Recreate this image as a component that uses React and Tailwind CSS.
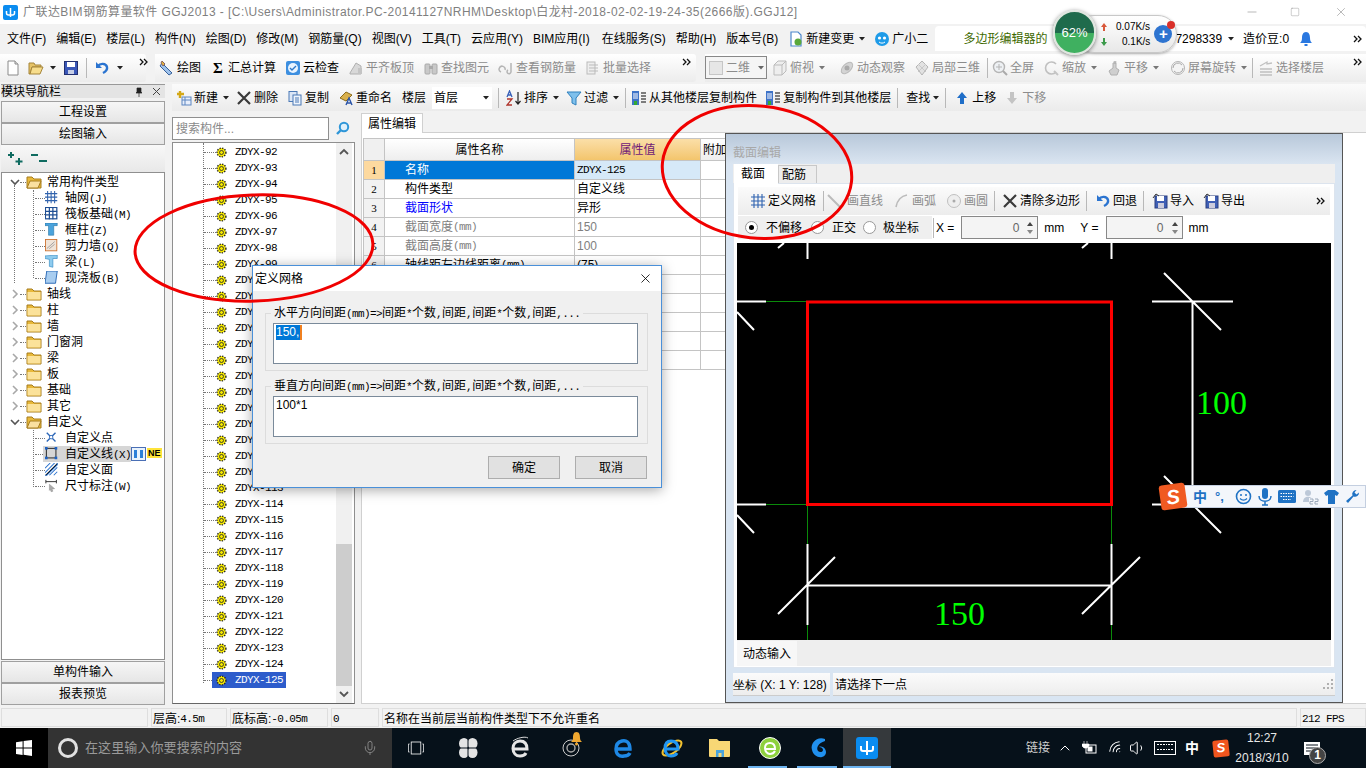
import React from 'react';
import { Mic, ChevronUp, Volume1, Wifi, Minus, Square, X } from 'lucide-react';

const Svg = ({ s = 16, v = 16, children, className = '' }) => (
  <svg width={s} height={s} viewBox={`0 0 ${v} ${v}`} className={`shrink-0 ${className}`}>{children}</svg>
);

const Arrow = ({ c = '#222', className = '' }) => (
  <svg width="6" height="4" viewBox="0 0 6 4" className={`shrink-0 ${className}`}><path d="M0 0h6L3 3.5z" fill={c} /></svg>
);
const More = ({ className = '' }) => (
  <svg width="9" height="8" viewBox="0 0 9 8" className={`shrink-0 ${className}`}><path d="M1 1l3 3-3 3M5 1l3 3-3 3" fill="none" stroke="#111" strokeWidth="1.3" /></svg>
);
const Sep = ({ className = '' }) => <div className={`w-px h-[20px] bg-[#b8b8b8] shrink-0 ${className}`} />;

const I = {
  file: () => <Svg><path d="M3 1h7l3 3v11H3z" fill="#fff" stroke="#8a8a8a" /><path d="M10 1v3h3" fill="#ddd" stroke="#8a8a8a" /></Svg>,
  open: () => <Svg><path d="M1 3h5l1 2h6v2H4L2 14H1z" fill="#e6c367" stroke="#a5853a" /><path d="M4 7h11l-3 7H2z" fill="#f7dd8c" stroke="#a5853a" /></Svg>,
  save: () => <Svg><rect x="1.5" y="1.5" width="13" height="13" fill="#3a57b8" stroke="#222f70" /><rect x="4" y="2" width="8" height="5" fill="#fff" /><rect x="5" y="10" width="6" height="4" fill="#c7cfe6" /></Svg>,
  undo: (c = '#2b74d0') => <Svg><path d="M4 6c2-3 8-3 9 1 .6 3-2 5-4 6" fill="none" stroke={c} strokeWidth="2.4" /><path d="M2 2v6h6z" fill={c} /></Svg>,
  draw: () => <Svg><path d="M3 3l10 10-3 2L1 6z" fill="#9fc2ec" stroke="#35609b" /><path d="M3 1l3 3-2 2-2-3z" fill="#e7b53a" stroke="#866" /></Svg>,
  sigma: () => <span className="w-4 text-center text-[15px] leading-4 font-bold font-['Liberation_Serif',serif] shrink-0">Σ</span>,
  cloud: () => <Svg><rect x="1" y="1" width="14" height="14" rx="2" fill="#3d8fe0" /><circle cx="8" cy="8" r="5" fill="#e9f4ff" /><path d="M5 8l2 2 4-4" fill="none" stroke="#2d78c8" strokeWidth="1.4" /></Svg>,
  gray1: () => <Svg><path d="M2 13l6-10 5 3v8H2z" fill="#d8d8d8" stroke="#b0b0b0" /><rect x="10" y="8" width="4" height="6" fill="#c4c4c4" /></Svg>,
  bino: () => <Svg><rect x="2" y="4" width="5" height="10" rx="1" fill="#c9c9c9" stroke="#aaa" /><rect x="9" y="4" width="5" height="10" rx="1" fill="#c9c9c9" stroke="#aaa" /><rect x="6" y="6" width="4" height="3" fill="#aaa" /></Svg>,
  d6: () => <Svg><path d="M3 12a3 3 0 1 1 4-2M13 3v9a2 2 0 1 1-3-2" fill="none" stroke="#b5b5b5" strokeWidth="1.5" /></Svg>,
  batch: () => <Svg><rect x="2" y="2" width="8" height="12" fill="#eee" stroke="#bbb" /><path d="M4 5h9M4 8h9M4 11h9" stroke="#bbb" /></Svg>,
  cube: () => <Svg><path d="M2 5l4-4h8v10l-4 4H2z" fill="#eee" stroke="#bbb" /><path d="M2 5h8v10M10 5l4-4" fill="none" stroke="#bbb" /></Svg>,
  orbit: () => <Svg><ellipse cx="8" cy="8" rx="7" ry="4" fill="#d4d4d4" stroke="#bbb" transform="rotate(-45 8 8)" /><circle cx="8" cy="8" r="2.5" fill="#aaa" /></Svg>,
  local3d: () => <Svg><path d="M8 1l6 6-6 8-6-8z" fill="#e2e2e2" stroke="#b5b5b5" /><path d="M4 4l8 8M12 4l-8 8" stroke="#c8c8c8" /></Svg>,
  full: () => <Svg><circle cx="7" cy="7" r="5.5" fill="#eef1f4" stroke="#b5b5b5" strokeWidth="1.4" /><path d="M11 11l4 4" stroke="#aaa" strokeWidth="2" /><path d="M7 4v6M4 7h6" stroke="#b5b5b5" /></Svg>,
  zoom: () => <Svg><path d="M12 4a6 6 0 1 0 0 8" fill="none" stroke="#c0c0c0" strokeWidth="1.6" /><path d="M10 11l4 4" stroke="#c5c5c5" strokeWidth="2" /></Svg>,
  pan: () => <Svg><path d="M5 15l-2-4 4-3V3h3v5l3 2-2 5z" fill="#cfcfcf" stroke="#b0b0b0" /><path d="M9 1v3M7.5 2h3" stroke="#aaa" /></Svg>,
  rotate: () => <Svg><circle cx="8" cy="8" r="6.5" fill="#f4f4f4" stroke="#b5b5b5" /><path d="M3 8a5 5 0 0 1 9-3M13 8a5 5 0 0 1-9 3" fill="none" stroke="#aaa" /></Svg>,
  layers: () => <Svg><path d="M2 6l7-4v2l5-1M2 9h12M2 12h12M2 15h12" fill="none" stroke="#c0c0c0" strokeWidth="1.3" /></Svg>,
  newc: () => <Svg><rect x="6" y="7" width="9" height="8" fill="#e7eefb" stroke="#5d86c0" /><path d="M6 10h9M9 7v8" stroke="#5d86c0" /><path d="M4 1v7M1 4h7" stroke="#d4a817" strokeWidth="2.4" /></Svg>,
  del: () => <Svg><path d="M2 2l12 12M14 2L2 14" stroke="#3a3a3a" strokeWidth="2.2" /></Svg>,
  copy: () => <Svg><rect x="2" y="1.5" width="8" height="10" fill="#dbe6f6" stroke="#4b79b5" /><rect x="6" y="5" width="8" height="10" fill="#eef4fc" stroke="#4b79b5" /><path d="M8 8h4M8 10h4M8 12h4" stroke="#4b79b5" /></Svg>,
  rename: () => <Svg><path d="M2 8l6-6 6 3-6 6z" fill="#d9b04c" stroke="#8a6a1a" /><path d="M8 15l3-7 3 7M9 13h4" fill="none" stroke="#2c55a8" strokeWidth="1.4" /></Svg>,
  sort: () => <Svg><path d="M1 7l2.500-6L6 7M2 5h3" fill="none" stroke="#3860b8" strokeWidth="1.300" /><path d="M1 9h5l-5 6h5" fill="none" stroke="#b0342c" strokeWidth="1.300" /><path d="M12 2v12M9.500 11l2.500 3 2.500-3" fill="none" stroke="#222" strokeWidth="1.2" /></Svg>,
  funnel: () => <Svg><path d="M1 2h14L10 8v7l-4-2V8z" fill="#7fc0ec" stroke="#2f80bd" /></Svg>,
  doc2: () => <Svg><rect x="1" y="1" width="7" height="14" fill="#3e73c8" /><path d="M2 4h5M2 6h5M2 8h5" stroke="#fff" /><path d="M10 3h5M10 6h5M10 9h5M10 12h5" stroke="#555" strokeWidth="1.3" /><rect x="3" y="11" width="3" height="4" fill="#3a3" /></Svg>,
  up: (c = '#1f6ec8') => <Svg><path d="M8 2l5 6h-3v6H6V8H3z" fill={c} /></Svg>,
  down: (c = '#c4c4c4') => <Svg><path d="M8 14l5-6h-3V2H6v6H3z" fill={c} /></Svg>,
  doc3: () => <Svg><path d="M3 1h7l3 3v11H3z" fill="#fff" stroke="#4c87cc" strokeWidth="1.2" /><circle cx="10" cy="11" r="3.5" fill="#5aa83a" /></Svg>,
  bot: () => <Svg><ellipse cx="8" cy="8" rx="7" ry="7" fill="#1e9be8" /><circle cx="5.5" cy="7" r="1.6" fill="#fff" /><circle cx="10.5" cy="7" r="1.6" fill="#fff" /><path d="M5 11c2 1.5 4 1.5 6 0" stroke="#fff" fill="none" /></Svg>,
  bell: () => <Svg><path d="M8 1c-3 0-4 3-4 6 0 3-1 4-2 5h12c-1-1-2-2-2-5 0-3-1-6-4-6z" fill="#2a78e0" /><rect x="6.5" y="13" width="3" height="2" fill="#2a78e0" /></Svg>,
  grid: () => <Svg><path d="M1 4h14M1 8h14M1 12h14M4 1v14M8 1v14M12 1v14" stroke="#2f62b0" strokeWidth="1.1" /></Svg>,
  lineg: () => <Svg><path d="M1 2l12 12" stroke="#bbb" strokeWidth="2" /></Svg>,
  arc: () => <Svg><path d="M2 14C3 8 7 3 13 2" fill="none" stroke="#bbb" strokeWidth="1.6" /></Svg>,
  circ: () => <Svg><circle cx="8" cy="8" r="6.5" fill="#eee" stroke="#c0c0c0" /><circle cx="8" cy="8" r="1.5" fill="#aaa" /></Svg>,
  floppy: () => <Svg><rect x="3" y="3" width="12" height="12" fill="#3f5fb5" stroke="#2b3f80" /><rect x="5" y="3" width="7" height="5" fill="#fff" /><rect x="6" y="10" width="6" height="5" fill="#ccd" /><path d="M1 5l3-4 3 2" fill="none" stroke="#333" /></Svg>,
};

const T = ({ ic, label, arrow, gray, className = '', gap = 'gap-[2px]' }) => (
  <div className={`flex items-center shrink-0 ${gap} ${gray ? 'text-[#8c8c8c]' : 'text-black'} ${className}`}>
    {ic}
    <span className="whitespace-nowrap">{label}</span>
    {arrow && <Arrow className="ml-[3px]" c={gray ? '#777' : '#222'} />}
  </div>
);

const Folder = ({ open }) => (
  <Svg s={16}>
    <path d="M1 3h5l2 2h7v9H1z" fill="#e8b93a" stroke="#a67c1e" />
    {open ? <path d="M4 7h11l-3 7H1z" fill="#fae0a0" stroke="#a67c1e" /> : <rect x="1.5" y="6" width="13" height="7.5" fill="#fbe29a" />}
  </Svg>
);

const TreeIcons = {
  axis: <Svg s={14}><path d="M0 3h14M0 7h14M0 11h14M3 0v14M7 0v14M11 0v14" stroke="#3163ad" strokeWidth="1.2" /></Svg>,
  raft: <Svg s={14}><rect x="0.5" y="0.5" width="13" height="13" fill="#fff" stroke="#1f4f94" strokeWidth="1.4" /><path d="M0 5h14M0 9h14M5 0v14M9 0v14" stroke="#1f4f94" strokeWidth="1.4" /></Svg>,
  col: <Svg s={14}><path d="M0 0h14v3H10v11H4V3H0z" fill="#4aa3dc" stroke="#1f6da0" strokeWidth=".6" /></Svg>,
  wall: <Svg s={14}><rect x="0.5" y="0.5" width="13" height="13" fill="#f0e4d8" stroke="#cc6f2d" /><path d="M2 11l9-8M5 11l6-5" stroke="#999" /></Svg>,
  beam: <Svg s={14}><path d="M0 1l14-1v4H9v10l-4-1V5L0 4z" fill="#8ecbee" stroke="#2d86c0" strokeWidth=".7" /></Svg>,
  slab: <Svg s={14}><path d="M2 0h12l-2 14H0z" fill="#a8cdf0" stroke="#1c5fb0" /></Svg>,
  pt: <Svg s={14}><path d="M2 2l10 10M12 2L2 12" stroke="#2b66b8" strokeWidth="1.6" /><circle cx="7" cy="7" r="2" fill="#fff" stroke="#2b66b8" /></Svg>,
  line: <Svg s={14}><rect x="1.5" y="1.5" width="11" height="11" fill="none" stroke="#111" /><g fill="#1d62c4"><rect x="0" y="0" width="3" height="3" /><rect x="11" y="0" width="3" height="3" /><rect x="0" y="11" width="3" height="3" /><rect x="11" y="11" width="3" height="3" /></g></Svg>,
  face: <Svg s={14}><path d="M0 6l6-6M0 11L11 0M0 14h2L14 2V0M5 14l9-9M10 14l4-4" stroke="#2b72cc" strokeWidth="1.2" /></Svg>,
  dim: <Svg s={14}><path d="M1 1v4M13 1v4M1 3h12" stroke="#333" strokeWidth="1.1" /><path d="M5 6l6 5-3 .5 1 2.5-2 .5-1-2.5L5 13z" fill="#aaa" stroke="#888" strokeWidth=".5" /></Svg>,
};

const Mono = ({ children }) => <span className="font-['Liberation_Mono',monospace] text-[11px] tracking-[-0.6px]">{children}</span>;

const Root = ({ label, open }) => (
  <div className="h-4 flex items-center pl-[8px]">
    <svg width="10" height="10" viewBox="0 0 10 10" className="shrink-0">
      {open ? <path d="M1 3l4 4 4-4" fill="none" stroke="#555" strokeWidth="1.6" /> : <path d="M3 1l4 4-4 4" fill="none" stroke="#a8a8a8" strokeWidth="1.6" />}
    </svg>
    <div className="w-[6px] border-t border-dotted border-[#777] shrink-0" />
    <Folder open={open} />
    <span className="ml-[5px] whitespace-nowrap">{label}</span>
  </div>
);

const Child = ({ ic, label, k, selected }) => (
  <div className="h-4 flex items-center pl-[33px]">
    <div className="w-[10px] border-t border-dotted border-[#777] shrink-0" />
    <div className={`flex items-center h-4 ${selected ? 'bg-[#d6d6d6] -ml-[2px] pl-[2px]' : ''}`}>
      <span className="w-[14px] flex justify-center shrink-0">{ic}</span>
      <span className="ml-[6px] whitespace-nowrap">{label}{k && <Mono>({k})</Mono>}</span>
    </div>
    {selected && (
      <>
        <svg width="15" height="14" viewBox="0 0 15 14" className="shrink-0"><rect x=".5" y=".5" width="14" height="13" fill="#e8f2fc" stroke="#4a6fb5" /><path d="M3 3h3v8H3zM9 3h3v8H9z" fill="#2b7fd8" /></svg>
        <span className="ml-px px-px h-[10px] leading-[10px] -mt-[3px] bg-[#ffe43a] text-[9px] font-bold font-['Liberation_Sans',sans-serif]">NE</span>
      </>
    )}
  </div>
);

const SideBtn = ({ children, className = '' }) => (
  <div className={`h-[22px] flex items-center justify-center bg-gradient-to-b from-[#f6f6f6] to-[#e6e6e6] border border-[#a0a0a0] ${className}`}>{children}</div>
);

const LeftPanel = () => (
  <div className="w-[165px] shrink-0 flex flex-col h-[625px] pl-px">
    <div className="h-[14px] mt-[2px] flex items-center justify-between bg-[#e4e4e4] border-t border-[#999] pr-[4px]">
      <span className="text-[12px] leading-[12px] whitespace-nowrap">模块导航栏</span>
      <div className="flex items-center gap-[8px]">
        <Svg s={10} v={10}><path d="M3 1h4v4l1 1H2l1-1zM5 6v4" fill="#222" stroke="#222" strokeWidth=".7" /></Svg>
        <Svg s={9} v={9}><path d="M1 1l7 7M8 1L1 8" stroke="#444" /></Svg>
      </div>
    </div>
    <SideBtn className="mt-[3px]">工程设置</SideBtn>
    <SideBtn>绘图输入</SideBtn>
    <div className="h-[27px] flex items-center gap-[7px] pl-[6px] bg-gradient-to-b from-[#f8f8f8] to-[#e8e8e8]">
      <Svg s={17} v={17}><path d="M4 2v6M1 5h6" stroke="#0f6b60" strokeWidth="2" /><path d="M12 8v7M8.5 11.5h7" stroke="#0f6b60" strokeWidth="2" /></Svg>
      <Svg s={17} v={17}><path d="M0 5h7M8 11h8" stroke="#0f6b60" strokeWidth="2" /></Svg>
    </div>
    <div className="relative h-[488px] bg-white border border-[#8f8f8f] pt-[1px]">
      <div className="absolute left-[12px] top-[12px] h-[98px] border-l border-dotted border-[#777]" />
      <div className="absolute left-[31px] top-[17px] h-[88px] border-l border-dotted border-[#777]" />
      <div className="absolute left-[31px] top-[257px] h-[57px] border-l border-dotted border-[#777]" />
      <Root open label="常用构件类型" />
      <Child ic={TreeIcons.axis} label="轴网" k="J" />
      <Child ic={TreeIcons.raft} label="筏板基础" k="M" />
      <Child ic={TreeIcons.col} label="框柱" k="Z" />
      <Child ic={TreeIcons.wall} label="剪力墙" k="Q" />
      <Child ic={TreeIcons.beam} label="梁" k="L" />
      <Child ic={TreeIcons.slab} label="现浇板" k="B" />
      {['轴线', '柱', '墙', '门窗洞', '梁', '板', '基础', '其它'].map((l, i) => <Root key={i} label={l} />)}
      <Root open label="自定义" />
      <Child ic={TreeIcons.pt} label="自定义点" />
      <Child ic={TreeIcons.line} label="自定义线" k="X" selected />
      <Child ic={TreeIcons.face} label="自定义面" />
      <Child ic={TreeIcons.dim} label="尺寸标注" k="W" />
    </div>
    <SideBtn className="mt-px">单构件输入</SideBtn>
    <SideBtn>报表预览</SideBtn>
  </div>
);

const Gear = () => (
  <svg width="11" height="11" viewBox="0 0 11 11" className="shrink-0">
    <circle cx="5.5" cy="5.5" r="4.4" fill="#f5e800" stroke="#222" strokeWidth="1.4" strokeDasharray="1.3 1.3" />
    <circle cx="5.5" cy="5.5" r="2" fill="#f5e800" stroke="#333" strokeWidth=".9" />
  </svg>
);

const ListPanel = () => {
  const rows = [];
  for (let i = 92; i <= 125; i++) rows.push(i);
  return (
    <div className="w-[183px] shrink-0 flex flex-col">
      <div className="h-[23px] mt-[6px] flex">
        <div className="w-[157px] bg-white border border-[#8f8f8f] flex items-center pl-[3px] text-[#8a8a8a]">搜索构件...</div>
        <div className="flex-1 flex items-center justify-center">
          <svg width="15" height="15" viewBox="0 0 15 15"><circle cx="9" cy="6" r="4.2" fill="#dff0fb" stroke="#2e96d8" strokeWidth="2" /><path d="M6 9l-4 4" stroke="#2e96d8" strokeWidth="2.4" /></svg>
        </div>
      </div>
      <div className="relative mt-[2px] h-[562px] bg-white border border-[#8f8f8f] border-b-[#666] overflow-hidden flex">
        <div className="absolute left-[30px] top-0 bottom-[20px] border-l border-dotted border-[#777]" />
        <div className="flex-1 pt-[1px]">
          {rows.map((n) => (
            <div key={n} className="h-4 flex items-center pl-[31px]">
              <div className="w-[12px] border-t border-dotted border-[#777] shrink-0" />
              <div className={`flex items-center h-4 ${n === 125 ? 'bg-[#2d5ccb] text-white -ml-[4px] pl-[4px] pr-[3px]' : 'text-black'}`}>
                <Gear />
                <span className="ml-[8px] leading-4 text-[11px] tracking-[-0.6px] font-['Liberation_Mono',monospace] whitespace-nowrap">ZDYX-{n}</span>
              </div>
            </div>
          ))}
        </div>
        <div className="w-[16px] mr-[2px] bg-[#f0f0f0] flex flex-col items-center">
          <svg width="16" height="18" viewBox="0 0 16 18" className="shrink-0"><path d="M4 11l4-4 4 4" fill="none" stroke="#555" strokeWidth="1.8" /></svg>
          <div className="flex-1" />
          <div className="w-full h-[142px] bg-[#cdcdcd]" />
          <svg width="16" height="17" viewBox="0 0 16 17" className="shrink-0"><path d="M4 6l4 4 4-4" fill="none" stroke="#555" strokeWidth="1.8" /></svg>
        </div>
      </div>
    </div>
  );
};

const Check = () => <span className="block w-[13px] h-[13px] border border-[#444] bg-white mx-auto" />;

const PropRow = ({ n, name, value, tone, check, mono, active }) => (
  <div className="h-[19px] grid grid-cols-[21px_190px_126px_1fr] border-b border-[#c4c4c4]">
    <div className={`flex items-center justify-center border-r border-[#c4c4c4] text-[11px] font-['Liberation_Serif',serif] ${active ? 'bg-[#fdd99f]' : 'bg-[#f2f2f2]'}`}>{n}</div>
    <div className={`pl-[20px] flex items-center border-r border-[#c4c4c4] whitespace-nowrap ${active ? 'bg-[#0078d7] text-white' : tone}`}>{name}</div>
    <div className={`pl-[2px] flex items-center border-r border-[#c4c4c4] whitespace-nowrap ${active ? 'bg-[#d6e9f8]' : ''} ${tone === 'text-[#808080]' ? 'text-[#808080]' : ''}`}>{mono ? <Mono>{value}</Mono> : value}</div>
    <div className="flex items-center">{check && <Check />}</div>
  </div>
);

const PropPanel = () => (
  <div className="flex-1 flex flex-col ml-[6px] min-w-0">
    <div className="h-[19px] mt-[2px] flex">
      <div className="w-[62px] h-[20px] flex items-center justify-center bg-white border border-b-0 border-[#d0d0d0] z-10">属性编辑</div>
    </div>
    <div className="h-[572px] bg-white border border-[#d0d0d0] border-r-0 pt-[5px] pl-[1px]">
      <div className="w-[800px] border-l border-t border-[#c4c4c4]">
        <div className="h-[22px] grid grid-cols-[21px_190px_126px_1fr] border-b border-[#c4c4c4]">
          <div className="bg-[#f0f0f0] border-r border-[#c4c4c4]" />
          <div className="bg-gradient-to-b from-white to-[#eee] border-r border-[#c4c4c4] flex items-center justify-center">属性名称</div>
          <div className="bg-gradient-to-b from-[#fbdfa8] to-[#f3c56c] border-r border-[#c4c4c4] flex items-center justify-center text-[#701a78]">属性值</div>
          <div className="bg-gradient-to-b from-white to-[#eee] flex items-center pl-[2px]">附加</div>
        </div>
        <PropRow active n="1" name="名称" value="ZDYX-125" mono />
        <PropRow n="2" name="构件类型" value="自定义线" check />
        <PropRow n="3" name="截面形状" value="异形" tone="text-[#0000ff]" />
        <PropRow n="4" name={<>截面宽度<Mono>(mm)</Mono></>} value="150" tone="text-[#808080]" check />
        <PropRow n="5" name={<>截面高度<Mono>(mm)</Mono></>} value="100" tone="text-[#808080]" check />
        <PropRow n="6" name={<>轴线距左边线距离<Mono>(mm)</Mono></>} value="(75)" check />
        {[7, 8, 9, 10, 11].map((n) => <PropRow key={n} n={n} name="" value="" />)}
      </div>
    </div>
  </div>
);

const Legend = ({ label }) => (
  <span className="absolute left-[5px] -top-[9px] bg-[#f0f0f0] px-[3px] text-[12px] leading-[16px] whitespace-nowrap">
    {label}<Mono>(mm)=&gt;</Mono>间距<Mono>*</Mono>个数<Mono>,</Mono>间距<Mono>,</Mono>间距<Mono>*</Mono>个数<Mono>,</Mono>间距<Mono>,...</Mono>
  </span>
);

const Group = ({ label, text, sel }) => (
  <div className="relative w-[383px] h-[58px] border border-[#dcdcdc] ml-[12px] pt-[9px] pl-[7px]">
    <Legend label={label} />
    <div className="w-[365px] h-[41px] bg-white border border-[#7a8a9a] pl-[2px] pt-[1px] font-['Liberation_Sans',sans-serif] text-[12px] leading-[15px]">
      {sel ? <span className="inline-block bg-[#0078d7] text-white pr-px border-r-2 border-r-[#f08020]">{text}</span> : text}
    </div>
  </div>
);

const Dialog = () => (
  <div className="absolute left-[252px] top-[265px] w-[410px] h-[223px] bg-[#f0f0f0] border border-[#4a90d9] shadow-[0_2px_12px_rgba(0,0,0,0.35)] flex flex-col">
    <div className="h-[25px] bg-white flex items-center justify-between pl-[2px] pr-[8px]">
      <span className="text-[12px]">定义网格</span>
      <X size={15} strokeWidth={1.3} className="text-black" />
    </div>
    <div className="h-[22px]" />
    <Group label="水平方向间距" text="150," sel />
    <div className="h-[15px]" />
    <Group label="垂直方向间距" text="100*1" />
    <div className="flex justify-end gap-[15px] pr-[14px] mt-[12px]">
      <div className="w-[72px] h-[23px] flex items-center justify-center bg-[#e1e1e1] border border-[#adadad]">确定</div>
      <div className="w-[72px] h-[23px] flex items-center justify-center bg-[#e1e1e1] border border-[#adadad]">取消</div>
    </div>
  </div>
);

const Canvas = () => (
  <div className="h-[397px] bg-black mx-[3px]">
    <svg width="595" height="397" viewBox="737 243 595 397" className="block" fontFamily="Liberation Serif">
      <g stroke="#0a8a0a" strokeWidth="1">
        <path d="M766 301.5h41M766 504.5h41M807.5 505v135M1111.5 505v135" />
      </g>
      <g stroke="#fff" strokeWidth="2" fill="none">
        <path d="M737 301.5h29M737 312l17 18M737 504.5h29M737 515l17 18" />
        <path d="M807.5 243v16M778 248l6-5M1111.5 243v16M1082 248l6-5" />
        <path d="M1152 301.5h81M1164 273l57 57M1192.5 301v204M1152 504.5h81M1164 476l57 57" />
        <path d="M807.5 544v81M1111.5 544v81M807 585.5h305M778 614l57-57M1082 614l58-57" strokeWidth="2" />
      </g>
      <rect x="807.5" y="302" width="304" height="202.5" fill="none" stroke="#ff0000" strokeWidth="3" />
      <text x="1196" y="414" fontSize="34" fill="#00ff00">100</text>
      <text x="934" y="625" fontSize="34" fill="#00ff00">150</text>
    </svg>
  </div>
);

const Radio = ({ on }) => (
  <span className="w-[13px] h-[13px] rounded-full border border-[#999] bg-white flex items-center justify-center shrink-0">
    {on && <span className="w-[5px] h-[5px] rounded-full bg-black" />}
  </span>
);

const Spin = ({ className = '' }) => (
  <div className={`w-[77px] h-[23px] border border-[#888] bg-[#f4f4f4] flex items-center justify-end text-[#666] font-['Liberation_Sans',sans-serif] ${className}`}>
    <span>0</span>
    <span className="w-[14px] flex flex-col items-center gap-[4px] ml-[4px]">
      <svg width="6" height="4" viewBox="0 0 6 4"><path d="M0 4h6L3 0z" fill="#444" /></svg>
      <svg width="6" height="4" viewBox="0 0 6 4"><path d="M0 0h6L3 4z" fill="#888" /></svg>
    </span>
  </div>
);

const Grip = () => (
  <div className="grid grid-cols-3 gap-[1px] w-[11px] h-[11px]">
    {[0, 0, 1, 0, 1, 1, 1, 1, 1].map((v, i) => <span key={i} className={`w-[2px] h-[2px] ${v ? 'bg-[#b0b0b0]' : ''}`} />)}
  </div>
);

const FloatWin = () => (
  <div className="absolute left-[725px] top-[133px] w-[618px] h-[570px] border border-[#555] bg-[#d9e5f2] flex flex-col">
    <div className="h-[30px] flex items-end pb-[3px] pl-[7px] text-[#a8a8a8] bg-gradient-to-b from-[#b8c8da] to-[#dae5f1]">截面编辑</div>
    <div className="h-[19px] flex mx-[7px] bg-[#efefef]">
      <div className="w-[44px] h-[20px] bg-white flex items-center pl-[7px] z-10 ml-px">截面</div>
      <div className="w-[39px] h-[18px] mt-px bg-[#ededed] border border-b-0 border-[#c8c8c8] flex items-center pl-[3px]">配筋</div>
    </div>
    <div className="h-[485px] mx-[7px] bg-white border border-[#dce4ee] flex flex-col">
      <div className="h-[28px] mt-[3px] mx-[4px] flex items-center bg-gradient-to-b from-[#fbfbfb] to-[#ececec] pl-[12px] pr-[5px]">
        <T ic={I.grid()} label="定义网格" />
        <Sep className="ml-[7px]" />
        <T ic={I.lineg()} label="画直线" gray className="ml-[3px]" gap="gap-[4px]" />
        <T ic={I.arc()} label="画弧" gray className="ml-[11px]" />
        <T ic={I.circ()} label="画圆" gray className="ml-[10px]" />
        <Sep className="ml-[6px]" />
        <T ic={I.del()} label="清除多边形" className="ml-[7px]" />
        <Sep className="ml-[6px]" />
        <T ic={I.undo()} label="回退" className="ml-[8px]" />
        <Sep className="ml-[6px]" />
        <T ic={I.floppy()} label="导入" className="ml-[8px]" />
        <T ic={I.floppy()} label="导出" className="ml-[9px]" />
        <More className="ml-auto" />
      </div>
      <div className="h-[25px] mx-[4px] flex items-center">
        <div className="h-[23px] flex items-center bg-[#efefef] pl-[7px] w-[194px]">
          <Radio on />
          <span className="ml-[8px]">不偏移</span>
          <span className="ml-[9px]"><Radio /></span>
          <span className="ml-[8px]">正交</span>
          <span className="ml-[7px]"><Radio /></span>
          <span className="ml-[7px]">极坐标</span>
        </div>
        <Sep className="ml-px" />
        <span className="ml-[2px] font-['Liberation_Sans',sans-serif]">X =</span>
        <Spin className="ml-[7px]" />
        <span className="ml-[6px] font-['Liberation_Sans',sans-serif]">mm</span>
        <span className="ml-[16px] font-['Liberation_Sans',sans-serif]">Y =</span>
        <Spin className="ml-[7px]" />
        <span className="ml-[6px] font-['Liberation_Sans',sans-serif]">mm</span>
      </div>
      <div className="h-[3px]" />
      <Canvas />
      <div className="h-[26px] mx-[3px] bg-[#eeeeee] flex items-end">
        <div className="w-[60px] h-[25px] bg-[#f7f7f7] flex items-center justify-center">动态输入</div>
      </div>
    </div>
    <div className="h-[23px] mt-[5px] mx-[7px] flex gap-[3px]">
      <div className="w-[97px] pt-px bg-gradient-to-b from-[#fbfbfb] to-[#ededed] border-b border-[#ccc] flex items-center whitespace-nowrap font-['Liberation_Sans',sans-serif]">坐标 (X: 1 Y: 128)</div>
      <div className="flex-1 pt-px bg-gradient-to-b from-[#fbfbfb] to-[#ededed] border-b border-[#ccc] flex items-center justify-between pl-[2px] pr-[1px]">
        <span>请选择下一点</span>
        <Grip />
      </div>
    </div>
  </div>
);

const NetWidget = () => (
  <div className="absolute left-[1053px] top-[10px] w-[124px] h-[45px]">
    <div className="absolute left-[22px] top-[5px] w-[102px] h-[38px] rounded-full bg-gradient-to-b from-[#ffffff] to-[#e8e8e8] border border-[#c8c8c8] shadow-[0_1px_3px_rgba(0,0,0,0.3)] flex items-center pl-[25px]">
      <div className="flex flex-col gap-[3px] text-[10px] leading-[12px] font-['Liberation_Sans',sans-serif]">
        <div className="flex items-center gap-[9px] whitespace-nowrap">
          <svg width="6" height="8" viewBox="0 0 6 8"><path d="M3 0l3 4H4v4H2V4H0z" fill="#d9583a" /></svg>0.07K/s
        </div>
        <div className="flex items-center gap-[15px] whitespace-nowrap">
          <svg width="6" height="8" viewBox="0 0 6 8"><path d="M3 8l3-4H4V0H2v4H0z" fill="#3b9a4a" /></svg>0.1K/s
        </div>
      </div>
      <span className="relative w-[18px] h-[18px] ml-[4px] rounded-full bg-[#2e74d0] text-white text-[15px] leading-[17px] text-center font-bold font-['Liberation_Sans',sans-serif]">
        +
        <span className="absolute -right-[3px] -top-[4px] w-[8px] h-[8px] rounded-full bg-[#d9302a]" />
      </span>
    </div>
    <div className="absolute left-0 top-0 w-[43px] h-[45px] rounded-full border-2 border-[#dfe6df] shadow-[0_1px_4px_rgba(0,0,0,0.5)] overflow-hidden bg-gradient-to-b from-[#1f6b4c] from-50% to-[#3fb060] to-50% flex items-center justify-center text-white text-[13px] font-['Liberation_Sans',sans-serif]">
      62%
    </div>
  </div>
);

const Sogou = () => (
  <div className="absolute left-[1160px] top-[483px] w-[206px] h-[27px]">
    <div className="absolute left-[14px] top-[2px] right-0 h-[23px] bg-[#f3f6fb] border border-[#c4cfe0] flex items-center pl-[18px] text-[#1f72c4]">
      <span className="font-bold text-[14px] w-[22px]">中</span>
      <span className="font-bold w-[20px] font-['Liberation_Sans',sans-serif] text-[13px]">°,</span>
      <svg width="17" height="17" viewBox="0 0 17 17" className="shrink-0"><circle cx="8.5" cy="8.5" r="7" fill="none" stroke="#1f72c4" strokeWidth="1.6" /><circle cx="6" cy="7" r="1" fill="#1f72c4" /><circle cx="11" cy="7" r="1" fill="#1f72c4" /><path d="M5 10.5c2 2 5 2 7 0" fill="none" stroke="#1f72c4" strokeWidth="1.3" /></svg>
      <svg width="14" height="18" viewBox="0 0 14 18" className="shrink-0 ml-[6px]"><rect x="4" y="0" width="6" height="11" rx="3" fill="#1f72c4" /><path d="M1 8c0 7 12 7 12 0M7 13v4M4 17h6" fill="none" stroke="#1f72c4" strokeWidth="1.5" /></svg>
      <svg width="18" height="13" viewBox="0 0 18 13" className="shrink-0 ml-[6px]"><rect x="0" y="0" width="18" height="13" rx="1.5" fill="#1f72c4" /><path d="M2.5 3.5h13M2.5 6.5h13M5 9.5h8" stroke="#fff" strokeDasharray="1.5 1" /></svg>
      <svg width="18" height="16" viewBox="0 0 18 16" className="shrink-0 ml-[6px]"><circle cx="6" cy="4" r="3" fill="#bcc8d8" /><path d="M1 13c0-7 10-7 10 0z" fill="#bcc8d8" /><rect x="7" y="9" width="11" height="7" fill="#f3f6fb" /><path d="M8 10h3v2.500H8V15h3M13 10h3v2.500h-3V15h3" fill="none" stroke="#9aa8ba" /></svg>
      <svg width="15" height="15" viewBox="0 0 15 15" className="shrink-0 ml-[4px]"><path d="M4 1h7l4 3-2 3-2-1v9H4V6L2 7 0 4z" fill="#1f72c4" /></svg>
      <svg width="15" height="15" viewBox="0 0 15 15" className="shrink-0 ml-[6px]"><path d="M14 3.5a4 4 0 0 1-5.5 4L3 14l-2-2 6.5-5.5A4 4 0 0 1 11.5 1L9.5 3.5l2 2z" fill="#1f72c4" /></svg>
    </div>
    <div className="absolute left-0 top-[1px] w-[26px] h-[25px] bg-[#f05a22] rounded-[3px] -rotate-[8deg] flex items-center justify-center text-white font-bold italic text-[20px] leading-none font-['Liberation_Sans',sans-serif]">S</div>
  </div>
);

const Taskbar = () => (
  <div className="h-[40px] bg-[#06111a] flex items-center text-white shrink-0 relative">
    <div className="w-[48px] h-full bg-black flex items-center justify-center">
      <svg width="16" height="16" viewBox="0 0 16 16"><path d="M0 2.2l6.6-1v6.4H0zM7.6 1l8.4-1v7.6H7.6zM0 8.6h6.6V15L0 14zM7.6 8.6H16V16l-8.4-1.2z" fill="#fff" /></svg>
    </div>
    <div className="w-[344px] h-full bg-[#333333] flex items-center pl-[10px] pr-[14px] text-[#9a9a9a] text-[13px]">
      <span className="w-[20px] h-[20px] rounded-full border-[3px] border-[#e0e0e0] shrink-0" />
      <span className="ml-[7px] flex-1 tracking-[0.1px]">在这里输入你要搜索的内容</span>
      <Mic size={16} className="text-[#888]" strokeWidth={1.4} />
    </div>
    <div className="ml-[16px] w-[16px] flex justify-center">
      <svg width="20" height="16" viewBox="0 0 20 16"><rect x="4" y="0.5" width="12" height="15" fill="none" stroke="#fff" /><path d="M2 3H0.5v10H2M18 3h1.5v10H18" fill="none" stroke="#fff" /></svg>
    </div>
    <div className="ml-[32px] w-[24px] flex justify-center">
      <svg width="22" height="22" viewBox="0 0 22 22"><g fill="#e4e4e4"><ellipse cx="7" cy="6.5" rx="5" ry="5.5" /><ellipse cx="15.5" cy="6.5" rx="5" ry="5.5" /><ellipse cx="7" cy="15.5" rx="5" ry="5.5" /><ellipse cx="15.5" cy="15.5" rx="5" ry="5.5" /></g><path d="M11 1v20M1 11h20" stroke="#06111a" strokeWidth="1" /></svg>
    </div>
    <div className="ml-[28px] w-[24px] flex justify-center">
      <svg width="22" height="24" viewBox="0 0 22 24"><path d="M5 13h13c0-6-3-8-7-8-4 0-7 3-7 7.5S7 20 11 20c3 0 5-1 6-3" fill="none" stroke="#e6e6e6" strokeWidth="3" /><path d="M4 5c4-3 12-5 15-3" fill="none" stroke="#ddd" /></svg>
    </div>
    <div className="relative ml-[28px] w-[24px] flex justify-center">
      <svg width="22" height="22" viewBox="0 0 22 22"><circle cx="10" cy="11" r="8" fill="none" stroke="#ccc" /><circle cx="10" cy="11" r="4" fill="none" stroke="#aaa" strokeWidth="1.4" /></svg>
      <svg className="absolute left-[10px] -top-[5px]" width="13" height="14" viewBox="0 0 13 14"><path d="M6.5 0C3.5 0 3 3 3 6c0 2-1 3-2 4h11c-1-1-2-2-2-4 0-3-.5-6-3.5-6z" fill="#f0a830" /><circle cx="6.500" cy="12" r="1.500" fill="#f0a830" /></svg>
    </div>
    <div className="ml-[27px] w-[24px] flex justify-center">
      <svg width="22" height="22" viewBox="0 0 22 22"><path d="M4 12h14c0-7-4-9-8-8-4 1-6 4-6 8 0 5 3 8 8 7 3 0 5-1 6-3" fill="none" stroke="#1e88e5" strokeWidth="3.4" /></svg>
    </div>
    <div className="ml-[25px] w-[24px] flex justify-center">
      <svg width="24" height="24" viewBox="0 0 24 24"><ellipse cx="12" cy="12" rx="11" ry="5" fill="none" stroke="#f2c230" strokeWidth="2" transform="rotate(-35 12 12)" /><path d="M5 13h13c0-6-3-8-7-8-4 0-6 3-6 7.500S8 20 11 20c3 0 5-1 6-3" fill="none" stroke="#2196f3" strokeWidth="3" /></svg>
    </div>
    <div className="ml-[24px] w-[24px] flex justify-center">
      <svg width="22" height="20" viewBox="0 0 22 20"><path d="M0 1h8l2 2h11v15a1 1 0 0 1-1 1H1a1 1 0 0 1-1-1z" fill="#f8d775" /><rect x="7" y="12" width="8" height="7" fill="#4aa3dc" /><rect x="9.500" y="15" width="3" height="4" fill="#f8d775" /></svg>
    </div>
    <div className="relative ml-[26px] w-[24px] flex justify-center">
      <svg width="24" height="24" viewBox="0 0 24 24"><circle cx="12" cy="12" r="10.500" fill="#8ed13e" stroke="#fff" /><path d="M7 13h10c0-4-2-6-5-6s-5 2-5 5 2 6 5 6c2 0 4-1 5-3" fill="none" stroke="#fff" strokeWidth="2" /></svg>
    </div>
    <div className="ml-[25px] w-[24px] flex justify-center">
      <svg width="24" height="24" viewBox="0 0 24 24"><path d="M18 3c-8-3-15 4-13 11 1 5 6 8 10 7 4-1 5-5 3-8-1-2-4-3-6-2 2 0 4 1 4 3s-3 3-5 1c-2-3 0-8 7-10z" fill="#2090ee" /></svg>
    </div>
    <div className="ml-[12px] w-[48px] h-full bg-[#35393c] flex items-center justify-center relative">
      <svg width="22" height="22" viewBox="0 0 22 22"><rect width="22" height="22" rx="3" fill="#0a8cf0" /><path d="M11 4v14M5 9v3a2 2 0 0 0 2 2h8a2 2 0 0 0 2-2V9" fill="none" stroke="#fff" strokeWidth="2" /></svg>
      <div className="absolute left-0 right-0 bottom-0 h-[2px] bg-[#6db4f0]" />
    </div>
    <div className="absolute left-[748px] bottom-0 w-[39px] h-[2px] bg-[#6db4f0]" />
    <div className="absolute left-[797px] bottom-0 w-[40px] h-[2px] bg-[#6db4f0]" />

    <div className="ml-[135px] text-[12px] text-[#d0d0d0] whitespace-nowrap">链接</div>
    <ChevronUp size={16} strokeWidth={1.5} className="ml-[7px]" />
    <div className="ml-[9px] w-[16px] flex justify-center">
      <svg width="16" height="14" viewBox="0 0 16 14"><rect x="4" y="4" width="10" height="8" fill="none" stroke="#fff" /><rect x="5.500" y="5.500" width="5" height="5" fill="#fff" /><path d="M2 0v3M5 0v3M0 3h7v2l-2 2H2L0 5z" stroke="#fff" fill="#fff" strokeWidth=".6" /></svg>
    </div>
    <Wifi size={16} strokeWidth={1.5} className="ml-[10px] -rotate-45" />
    <Volume1 size={18} strokeWidth={1.3} className="ml-[5px]" />
    <div className="ml-[7px] w-[22px] h-[14px] border border-white grid grid-cols-6 gap-px p-[2px]">
      {Array.from({ length: 12 }).map((_, i) => <span key={i} className="bg-white h-px" />)}
    </div>
    <span className="ml-[9px] text-[14px] font-bold">中</span>
    <span className="ml-[14px] w-[16px] h-[17px] rounded-[2px] -rotate-6 bg-[#f0551e] text-white italic font-bold text-[13px] leading-[16px] text-center font-['Liberation_Sans',sans-serif]">S</span>
    <div className="-ml-[3px] w-[72px] flex flex-col items-center text-[12px] leading-[20px] text-[#e8e8e8] font-['Liberation_Sans',sans-serif]">
      <span>12:27</span>
      <span>2018/3/10</span>
    </div>
    <div className="relative ml-[6px] w-[16px]">
      <svg width="16" height="13" viewBox="0 0 16 13"><path d="M0 0h16v13H0z" fill="#fff" /><path d="M2 3h12M2 6h12M2 9h12" stroke="#06111a" /></svg>
      <span className="absolute left-[5px] top-[5px] w-[17px] h-[17px] rounded-full bg-[#444] border border-[#aaa] text-[12px] leading-[15px] text-center font-bold font-['Liberation_Sans',sans-serif]">1</span>
    </div>
  </div>
);

const Cell = ({ className = '', children }) => (
  <div className={`h-[19px] pt-[2px] shrink-0 flex items-center whitespace-nowrap pl-[1px] bg-[#f2f2f2] border border-[#dedede] ${className}`}>{children}</div>
);

const MENU = ['文件(F)', '编辑(E)', '楼层(L)', '构件(N)', '绘图(D)', '修改(M)', '钢筋量(Q)', '视图(V)', '工具(T)', '云应用(Y)', 'BIM应用(I)'];

export default function App() {
  return (
    <div className="relative w-[1366px] h-[768px] overflow-hidden bg-[#f2f2f2] flex flex-col text-[12px] leading-[16px] text-black font-['Liberation_Sans','Noto_Sans_CJK_SC',sans-serif]">
      {/* title */}
      <div className="h-[24px] bg-white flex items-center pl-[3px] text-[#7f7f7f] shrink-0">
        <svg width="15" height="15" viewBox="0 0 15 15" className="shrink-0"><rect width="15" height="15" rx="2" fill="#0a8cf0" /><path d="M7.500 3v9M3.500 6v2a2 2 0 0 0 2 2h4a2 2 0 0 0 2-2V6" fill="none" stroke="#fff" strokeWidth="1.500" /></svg>
        <span className="ml-[5px] whitespace-nowrap tracking-[0.45px]">广联达BIM钢筋算量软件 GGJ2013 - [C:\Users\Administrator.PC-20141127NRHM\Desktop\白龙村-2018-02-02-19-24-35(2666版).GGJ12]</span>
        <div className="ml-auto flex items-center text-[#888]">
          <Minus size={14} strokeWidth={1} className="mr-[31px]" />
          <Square size={10} strokeWidth={1} className="mr-[34px]" />
          <X size={14} strokeWidth={1} className="mr-[18px]" />
        </div>
      </div>
      {/* menu */}
      <div className="h-[29px] flex items-center pl-[7px] gap-[10px] shrink-0 bg-[#f2f2f2]">
        {MENU.map((m) => <span key={m} className="whitespace-nowrap">{m}</span>)}
        <span className="whitespace-nowrap ml-[2px]">在线服务(S)</span>
        <span className="whitespace-nowrap">帮助(H)</span>
        <span className="whitespace-nowrap">版本号(B)</span>
        <T ic={I.doc3()} label="新建变更" arrow />
        <T ic={I.bot()} label="广小二" className="-ml-[1px]" />
        <div className="-ml-[3px] flex-1 h-[25px] bg-white rounded-t-[4px] flex items-center pl-[28px] pr-[4px]">
          <span className="text-[#3e6a00] whitespace-nowrap w-[212px] overflow-hidden">多边形编辑器的</span>
          <span className="whitespace-nowrap">7298339</span>
          <Arrow className="ml-[6px]" />
          <span className="ml-[9px] whitespace-nowrap">造价豆:0</span>
          <span className="ml-[9px]">{I.bell()}</span>
          <More className="ml-auto" />
        </div>
      </div>
      {/* toolbar 1 */}
      <div className="h-[29px] flex items-center shrink-0 gap-[9px]">
        <div className="h-[28px] w-[146px] flex items-center pl-[5px] gap-[7px] bg-gradient-to-b from-white to-[#ececec] rounded-r-[3px] relative">
          {I.file()}
          {I.open()}
          <Arrow className="-ml-[1px]" />
          {I.save()}
          <Sep />
          {I.undo()}
          <Arrow />
          <More className="absolute left-[139px] top-[4px]" />
        </div>
        <div className="h-[28px] w-[541px] flex items-center gap-[9px] bg-gradient-to-b from-white to-[#ececec] pl-[4px] rounded-r-[3px]">
          <T ic={I.draw()} label="绘图" />
          <T ic={I.sigma()} label="汇总计算" />
          <T ic={I.cloud()} label="云检查" />
          <T ic={I.gray1()} label="平齐板顶" gray />
          <T ic={I.bino()} label="查找图元" gray />
          <T ic={I.d6()} label="查看钢筋量" gray />
          <T ic={I.batch()} label="批量选择" gray />
          <More className="ml-auto mr-[5px] -mt-[12px]" />
        </div>
        <div className="flex-1 h-[28px] flex items-center bg-gradient-to-b from-white to-[#ececec] gap-[8px] pr-[4px]">
          <div className="w-[62px] h-[23px] border border-[#888] flex items-center pl-[3px] gap-[3px] text-[#8c8c8c] bg-[#f5f5f5] shrink-0">
            <span className="w-[14px] h-[14px] bg-[#e6e6e6] border border-[#c6c6c6]" />二维<Arrow className="ml-auto mr-[2px]" c="#666" />
          </div>
          <T ic={I.cube()} label="俯视" arrow gray className="-ml-[3px]" />
          <T ic={I.orbit()} label="动态观察" gray className="ml-[6px]" />
          <T ic={I.local3d()} label="局部三维" gray className="ml-[1px]" />
          <Sep className="-ml-[1px]" />
          <T ic={I.full()} label="全屏" gray className="-ml-[4px]" />
          <T ic={I.zoom()} label="缩放" arrow gray className="ml-[2px]" />
          <T ic={I.pan()} label="平移" arrow gray className="ml-[1px]" />
          <T ic={I.rotate()} label="屏幕旋转" arrow gray className="ml-[3px]" />
          <Sep className="-ml-[3px]" />
          <T ic={I.layers()} label="选择楼层" gray className="-ml-[3px]" />
          <More className="ml-auto -mt-[12px]" />
        </div>
      </div>
      {/* main */}
      <div className="flex-1 flex min-h-0">
        <LeftPanel />
        <div className="flex-1 min-w-0 flex flex-col pl-[7px]">
          <div className="h-[27px] mt-[2px] flex items-center bg-gradient-to-b from-[#fbfbfb] to-[#ebebeb] pl-[4px] shrink-0">
            <T ic={I.newc()} label="新建" arrow />
            <T ic={I.del()} label="删除" className="ml-[7px]" />
            <T ic={I.copy()} label="复制" className="ml-[9px]" />
            <T ic={I.rename()} label="重命名" className="ml-[9px]" />
            <span className="ml-[10px]">楼层</span>
            <div className="ml-[6px] w-[60px] h-[22px] bg-white flex items-center pl-[2px] justify-between pr-[3px]">首层<Arrow /></div>
            <Sep className="ml-[6px]" />
            <T ic={I.sort()} label="排序" arrow className="ml-[7px]" />
            <T ic={I.funnel()} label="过滤" arrow className="ml-[7px]" />
            <Sep className="ml-[6px]" />
            <T ic={I.doc2()} label="从其他楼层复制构件" className="ml-[5px]" />
            <T ic={I.doc2()} label="复制构件到其他楼层" className="ml-[8px]" />
            <Sep className="ml-[6px]" />
            <span className="ml-[8px] flex items-center">查找<Arrow className="ml-[3px]" /></span>
            <Sep className="ml-[6px]" />
            <T ic={I.up()} label="上移" className="ml-[8px]" />
            <T ic={I.down()} label="下移" gray className="ml-[8px]" />
          </div>
          <div className="flex-1 min-h-0 flex">
            <ListPanel />
            <PropPanel />
          </div>
        </div>
      </div>
      {/* status */}
      <div className="h-[21px] flex items-center gap-[3px] pl-[1px] shrink-0 bg-[#f2f2f2]">
        <Cell className="w-[147px]" />
        <Cell className="w-[76px]">层高:<Mono>4.5m</Mono></Cell>
        <Cell className="w-[98px]">底标高:<Mono>-0.05m</Mono></Cell>
        <Cell className="w-[48px]"><Mono>0</Mono></Cell>
        <Cell className="w-[915px]">名称在当前层当前构件类型下不允许重名</Cell>
        <Cell className="flex-1"><Mono>212 FPS</Mono></Cell>
      </div>
      <Taskbar />

      <Dialog />
      <FloatWin />
      <NetWidget />
      <Sogou />
      <svg className="absolute left-0 top-0 pointer-events-none" width="1366" height="768" viewBox="0 0 1366 768">
        <ellipse cx="254" cy="248" rx="119" ry="53" fill="none" stroke="#f00000" strokeWidth="3" transform="rotate(-2 254 248)" />
        <ellipse cx="757" cy="172" rx="95" ry="66" fill="none" stroke="#f00000" strokeWidth="3" transform="rotate(6 757 172)" />
      </svg>
    </div>
  );
}
